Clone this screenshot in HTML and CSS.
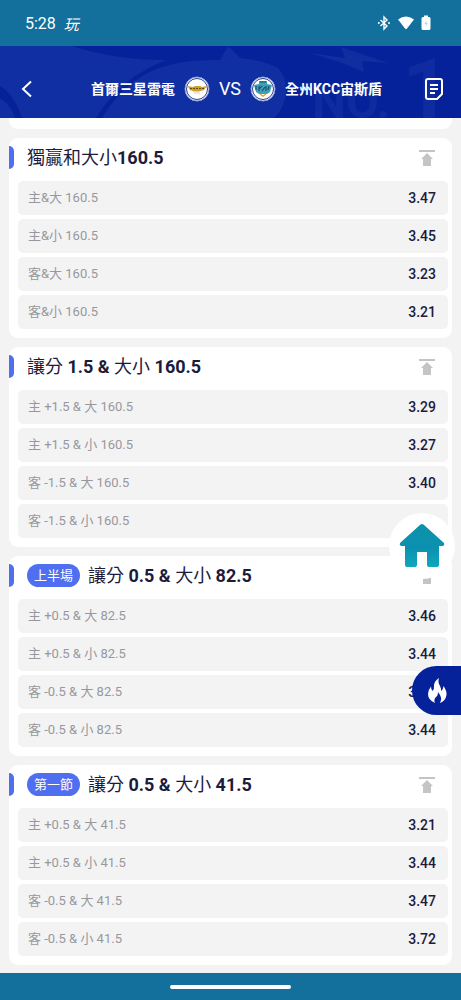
FILE: index.html
```html
<!DOCTYPE html>
<html lang="zh-Hant">
<head>
    <meta charset="UTF-8">
    <meta name="viewport" content="width=device-width, initial-scale=1.0">
    <title>首爾三星雷電 VS 全州KCC宙斯盾</title>
    <link rel="stylesheet" href="styles.css">
</head>
<body>

<!-- Phone status bar -->
<div class="status-bar">
    <span class="clock">5:28</span>
    <span class="app-mark">玩</span>
    <span class="status-icons">
        <svg width="14" height="16" viewBox="0 0 14 16">
            <path d="M3.5 5 L10 11 L7 14 V2 L10 5 L3.5 11" fill="none" stroke="#fff" stroke-width="1.4"/>
            <circle cx="1.8" cy="8" r="1" fill="#fff"/>
            <circle cx="12" cy="8" r="1" fill="#fff"/>
        </svg>
        <svg width="18" height="16" viewBox="0 0 18 16">
            <path d="M1 4.500 Q9 -1.500 17 4.500 L10 13.500 Q9 14.500 8 13.500 Z" fill="#fff"/>
        </svg>
        <svg width="10" height="16" viewBox="0 0 10 16">
            <path d="M3 0.500 H7 V2 H8 Q9.500 2 9.500 3.500 V13.500 Q9.500 15 8 15 H2 Q0.500 15 0.500 13.500 V3.500 Q0.500 2 2 2 H3 Z" fill="#fff"/>
            <path d="M5.400 5.500 L3.400 9 H4.800 V11.500 L6.700 8 H5.400 Z" fill="#b9d8e6"/>
        </svg>
    </span>
</div>

<!-- Match header -->
<header class="match-bar">
    <svg class="match-art" viewBox="0 0 461 72" preserveAspectRatio="xMidYMid slice">
        <path d="M0 0 H72 Q115 14 166 14 Q120 32 96 72 H22 Q14 48 0 40 Z" fill="#102fa2"/>
        <path d="M102 72 Q122 38 154 24 Q180 13 220 14 L228 0 L240 12 Q262 14 278 22 Q286 30 286 44 Q286 60 274 72 Z" fill="#102fa2"/>
        <path d="M0 52 Q12 60 15 72 H0 Z" fill="#102fa2"/>
        <path d="M310 7 L345 12 L341 1 L388 17 L362 15 L364 26 L342 17 Z" fill="#0f2ea0"/>
        <text x="312" y="72" class="art-text">NO.</text>
        <text x="402" y="72" class="art-text art-one">1</text>
    </svg>
    <button class="icon-btn" aria-label="返回">
        <svg width="12" height="18" viewBox="0 0 12 18">
            <path d="M10 1.500 L2 9 L10 16.500" fill="none" stroke="#fff" stroke-width="2"/>
        </svg>
    </button>
    <h1 class="teams">
        <span>首爾三星雷電</span>
        <svg width="26" height="26" viewBox="0 0 26 26">
            <circle cx="13" cy="13" r="12" fill="#fff" stroke="#8d9cd6" stroke-width="1"/>
            <circle cx="13" cy="13" r="10.500" fill="#fff" stroke="#27408f" stroke-width="1"/>
            <path d="M3.500 10 L9 11 L11 10 H16 L18 11 L23 10 L20 14 L15 15.500 H10 L6 14 Z" fill="#c9a227"/>
            <path d="M6 12.500 H20" stroke="#6b4a1f" stroke-width="1.200" stroke-dasharray="2 1"/>
            <path d="M10 17 H16" stroke="#e3c5cd" stroke-width="1"/>
        </svg>
        <span class="versus">VS</span>
        <svg width="26" height="26" viewBox="0 0 26 26">
            <circle cx="13" cy="13" r="12" fill="#fff" stroke="#8d9cd6" stroke-width="1"/>
            <circle cx="13" cy="13" r="10.500" fill="#fff" stroke="#27408f" stroke-width="1"/>
            <path d="M9 5 H17 V8 L22 9 L20 16 L17 18 H9 L6 16 L4 9 L9 8 Z" fill="#3aa0b4"/>
            <path d="M10 6 H16 M6 10 V14 M9 10 V15 M9 13 L12 10 M12 15 L15 11 M16 10 V15 M19 10 L18 14" stroke="#1d4f78" stroke-width="1.200" fill="none"/>
            <path d="M10 18 L13 20 L16 18" stroke="#dda545" stroke-width="1.500" fill="none"/>
        </svg>
        <span>全州KCC宙斯盾</span>
    </h1>
    <button class="icon-btn" aria-label="注單">
        <svg width="20" height="24" viewBox="0 0 20 24">
            <path d="M4 2 H16 Q18 2 18 4 V17 L13 22 H4 Q2 22 2 20 V4 Q2 2 4 2 Z" fill="none" stroke="#fff" stroke-width="2" stroke-linejoin="round"/>
            <path d="M6 8 H14 M6 12 H14 M6 16 H11" stroke="#fff" stroke-width="2"/>
        </svg>
    </button>
</header>

<main class="markets">
    <div class="card card-end"></div>

    <section class="card">
        <div class="card-head">
            <h2>獨贏和大小<b>160.5</b></h2>
            <button class="to-top" aria-label="置頂"><svg width="18" height="18" viewBox="0 0 18 18"><path d="M1 1 H17 V3 H1 Z M9 4 L15 10 H13 V17 H5 V10 H3 Z" fill="#c4c4c4"/></svg></button>
        </div>
        <button class="bet"><span>主&amp;大 160.5</span><b>3.47</b></button>
        <button class="bet"><span>主&amp;小 160.5</span><b>3.45</b></button>
        <button class="bet"><span>客&amp;大 160.5</span><b>3.23</b></button>
        <button class="bet"><span>客&amp;小 160.5</span><b>3.21</b></button>
    </section>

    <section class="card">
        <div class="card-head">
            <h2>讓分 <b>1.5 &amp;</b> 大小 <b>160.5</b></h2>
            <button class="to-top" aria-label="置頂"><svg width="18" height="18" viewBox="0 0 18 18"><path d="M1 1 H17 V3 H1 Z M9 4 L15 10 H13 V17 H5 V10 H3 Z" fill="#c4c4c4"/></svg></button>
        </div>
        <button class="bet"><span>主 +1.5 &amp; 大 160.5</span><b>3.29</b></button>
        <button class="bet"><span>主 +1.5 &amp; 小 160.5</span><b>3.27</b></button>
        <button class="bet"><span>客 -1.5 &amp; 大 160.5</span><b>3.40</b></button>
        <button class="bet"><span>客 -1.5 &amp; 小 160.5</span></button>
    </section>

    <section class="card">
        <div class="card-head">
            <span class="period">上半場</span>
            <h2>讓分 <b>0.5 &amp;</b> 大小 <b>82.5</b></h2>
            <button class="to-top" aria-label="置頂"><svg width="18" height="18" viewBox="0 0 18 18"><path d="M1 1 H17 V3 H1 Z M9 4 L15 10 H13 V17 H5 V10 H3 Z" fill="#c4c4c4"/></svg></button>
        </div>
        <button class="bet"><span>主 +0.5 &amp; 大 82.5</span><b>3.46</b></button>
        <button class="bet"><span>主 +0.5 &amp; 小 82.5</span><b>3.44</b></button>
        <button class="bet"><span>客 -0.5 &amp; 大 82.5</span><b>3.40</b></button>
        <button class="bet"><span>客 -0.5 &amp; 小 82.5</span><b>3.44</b></button>
    </section>

    <section class="card">
        <div class="card-head">
            <span class="period">第一節</span>
            <h2>讓分 <b>0.5 &amp;</b> 大小 <b>41.5</b></h2>
            <button class="to-top" aria-label="置頂"><svg width="18" height="18" viewBox="0 0 18 18"><path d="M1 1 H17 V3 H1 Z M9 4 L15 10 H13 V17 H5 V10 H3 Z" fill="#c4c4c4"/></svg></button>
        </div>
        <button class="bet"><span>主 +0.5 &amp; 大 41.5</span><b>3.21</b></button>
        <button class="bet"><span>主 +0.5 &amp; 小 41.5</span><b>3.44</b></button>
        <button class="bet"><span>客 -0.5 &amp; 大 41.5</span><b>3.47</b></button>
        <button class="bet"><span>客 -0.5 &amp; 小 41.5</span><b>3.72</b></button>
    </section>

    <!-- Floating buttons over the list -->
    <button class="float-home" aria-label="首頁">
        <svg width="46" height="46" viewBox="0 0 46 46">
            <defs>
                <linearGradient id="roof" x1="0" y1="0" x2="0" y2="1">
                    <stop offset="0" stop-color="#0d91a9"/>
                    <stop offset="0.550" stop-color="#0b91b0"/>
                    <stop offset="1" stop-color="#10a7bd"/>
                </linearGradient>
            </defs>
            <path d="M21.500 1.500 Q23 0.500 24.500 1.500 L45 20 Q46 22 44 23 H40 V42 Q40 44 38 44 H30 Q28 44 28 42 V29 H18 V42 Q18 44 16 44 H8 Q6 44 6 42 V23 H2 Q0 22 1 20 Z" fill="url(#roof)"/>
        </svg>
    </button>
    <button class="float-hot" aria-label="熱門">
        <svg width="20" height="26" viewBox="0 0 20 26">
            <path d="M12 0 Q10.500 4 13 8 Q14.500 11 14 13 Q16 12 16.500 8 Q20 13 19.500 17 Q18.500 23 13 25 Q16 20 11 14 Q11 18 8.500 19.500 Q6.500 22 8 25 Q1 22 1 16 Q1 12 4 8.500 Q4 12 5.500 13 Q7.500 11 7 8 Q7 3 12 0 Z" fill="#fff"/>
        </svg>
    </button>
</main>

<div class="nav-bar"><span class="nav-handle"></span></div>

</body>
</html>
```

FILE: styles.css
```css
* {
    box-sizing: border-box;
}
body {
    margin: 0;
    min-height: 100vh;
    display: flex;
    flex-direction: column;
    font-family: Roboto, "Noto Sans CJK TC", sans-serif;
    background-color: #f3f3f4;
    color: #1c1b3c;
}
button {
    padding: 0;
    border: none;
    background: none;
    color: inherit;
    font-family: inherit;
    cursor: pointer;
}
svg {
    display: block;
}

/* Status bar */
.status-bar {
    display: flex;
    align-items: center;
    height: 46px;
    padding: 0 30px 0 25px;
    background-color: #136f9b;
    color: #fff;
    font-size: 16px;
}
.app-mark {
    margin-left: 8px;
    font-size: 15px;
    font-style: italic;
}
.status-icons {
    display: flex;
    gap: 6px;
    margin-left: auto;
}

/* Match header */
.match-bar {
    position: relative;
    display: flex;
    align-items: center;
    justify-content: space-between;
    height: 72px;
    padding: 14px 17px 0 21px;
    background-color: #05229b;
    color: #fff;
}
.match-art {
    position: absolute;
    top: 0;
    left: 0;
    width: 100%;
    height: 100%;
    overflow: visible;
}
.art-text {
    fill: #0e2b9f;
    font-size: 48px;
    font-weight: 700;
}
.art-one {
    font-size: 84px;
}
.icon-btn,
.teams {
    position: relative;
}
.teams {
    display: flex;
    align-items: center;
    gap: 9px;
    margin: 0 0 0 16px;
    font-size: 14px;
    font-weight: 700;
    line-height: 26px;
    white-space: nowrap;
}
.versus {
    font-size: 18px;
    font-weight: 400;
}

/* Market cards */
.markets {
    position: relative;
    flex: 1;
    display: flex;
    flex-direction: column;
    gap: 9px;
    padding: 0 9px 8px;
}
.card {
    position: relative;
    display: flex;
    flex-direction: column;
    gap: 4px;
    padding: 0 4px 9px 9px;
    border-radius: 9px;
    background-color: #fff;
}
.card-end {
    height: 11px;
    border-radius: 0 0 9px 9px;
}
.card-head {
    display: flex;
    align-items: center;
    gap: 8px;
    height: 39px;
    padding: 0 12px 0 9px;
}
.card-head::before {
    content: "";
    position: absolute;
    top: 8px;
    left: 0;
    width: 5px;
    height: 23px;
    border-radius: 0 5px 5px 0;
    background-color: #4f6ff0;
}
.card-head h2 {
    margin: 0;
    font-size: 18px;
    font-weight: 400;
    line-height: 24px;
}
.period {
    padding: 0 7px;
    border-radius: 12px;
    background-color: #4f6ff0;
    color: #fff;
    font-size: 13px;
    line-height: 23px;
}
.to-top {
    margin-left: auto;
}
.bet {
    display: flex;
    align-items: center;
    justify-content: space-between;
    height: 34px;
    padding: 0 12px 0 10px;
    border-radius: 5px;
    background-color: #f3f3f4;
    font-size: 13px;
}
.bet span {
    padding-bottom: 3px;
    color: #98989c;
}
.bet b {
    font-size: 14px;
    font-weight: 500;
}

/* Floating buttons */
.float-home,
.float-hot {
    position: absolute;
    display: flex;
    align-items: center;
    justify-content: center;
}
.float-home {
    top: 395px;
    right: 6px;
    width: 66px;
    height: 66px;
    border-radius: 50%;
    background-color: #fff;
}
.float-hot {
    top: 548px;
    right: 0;
    width: 49px;
    height: 49px;
    border-radius: 25px 0 0 25px;
    background-color: #05229b;
}

/* Gesture bar */
.nav-bar {
    display: flex;
    align-items: center;
    justify-content: center;
    height: 27px;
    background-color: #136f9b;
}
.nav-handle {
    width: 121px;
    height: 4px;
    border-radius: 2px;
    background-color: #fff;
}
```
